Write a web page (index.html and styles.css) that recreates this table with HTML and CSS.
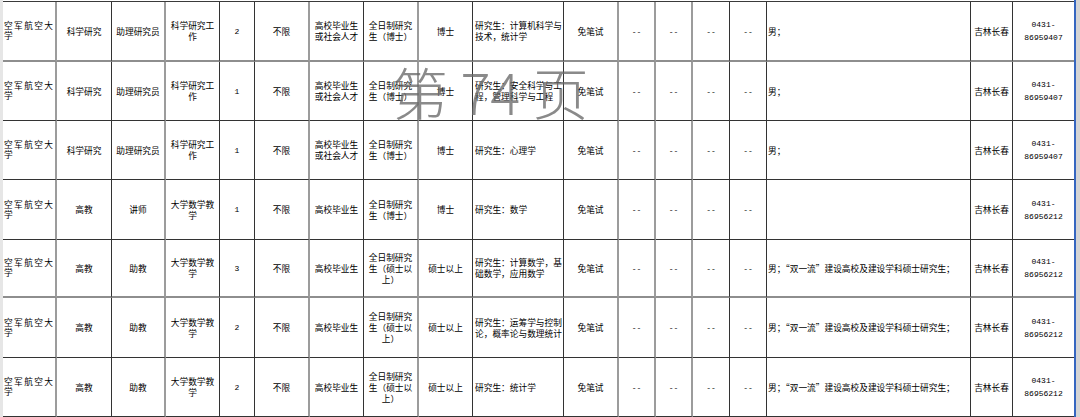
FILE: index.html
```html
<!DOCTYPE html>
<html lang="zh-CN">
<head>
<meta charset="utf-8">
<title>岗位表</title>
<link rel="stylesheet" href="styles.css">
</head>
<body>
<div class="page">
  <div class="strip"></div>
  <div class="sheet">
    <div class="grid">
      <!-- row 1 -->
      <div class="c c1 r1"><div><span class="dist">空军航空大</span><br>学</div></div>
      <div class="c c2 r1">科学研究</div>
      <div class="c c3 r1">助理研究员</div>
      <div class="c c4 r1">科学研究工<br>作</div>
      <div class="c c5 r1 num">2</div>
      <div class="c c6 r1">不限</div>
      <div class="c c7 r1">高校毕业生<br>或社会人才</div>
      <div class="c c8 r1">全日制研究<br>生（博士）</div>
      <div class="c c9 r1">博士</div>
      <div class="c c10 r1 left">研究生：计算机科学与<br>技术，统计学</div>
      <div class="c c11 r1">免笔试</div>
      <div class="c c12 r1 num">--</div>
      <div class="c c13 r1 num">--</div>
      <div class="c c14 r1 num">--</div>
      <div class="c c15 r1 num">--</div>
      <div class="c c16 r1 left">男；</div>
      <div class="c c17 r1">吉林长春</div>
      <div class="c c18 r1 num phone">0431-<br>86959407</div>
      <!-- row 2 -->
      <div class="c c1 r2"><div><span class="dist">空军航空大</span><br>学</div></div>
      <div class="c c2 r2">科学研究</div>
      <div class="c c3 r2">助理研究员</div>
      <div class="c c4 r2">科学研究工<br>作</div>
      <div class="c c5 r2 num">1</div>
      <div class="c c6 r2">不限</div>
      <div class="c c7 r2">高校毕业生<br>或社会人才</div>
      <div class="c c8 r2">全日制研究<br>生（博士）</div>
      <div class="c c9 r2">博士</div>
      <div class="c c10 r2 left">研究生：安全科学与工<br>程，管理科学与工程</div>
      <div class="c c11 r2">免笔试</div>
      <div class="c c12 r2 num">--</div>
      <div class="c c13 r2 num">--</div>
      <div class="c c14 r2 num">--</div>
      <div class="c c15 r2 num">--</div>
      <div class="c c16 r2 left">男；</div>
      <div class="c c17 r2">吉林长春</div>
      <div class="c c18 r2 num phone">0431-<br>86959407</div>
      <!-- row 3 -->
      <div class="c c1 r3"><div><span class="dist">空军航空大</span><br>学</div></div>
      <div class="c c2 r3">科学研究</div>
      <div class="c c3 r3">助理研究员</div>
      <div class="c c4 r3">科学研究工<br>作</div>
      <div class="c c5 r3 num">1</div>
      <div class="c c6 r3">不限</div>
      <div class="c c7 r3">高校毕业生<br>或社会人才</div>
      <div class="c c8 r3">全日制研究<br>生（博士）</div>
      <div class="c c9 r3">博士</div>
      <div class="c c10 r3 left">研究生：心理学</div>
      <div class="c c11 r3">免笔试</div>
      <div class="c c12 r3 num">--</div>
      <div class="c c13 r3 num">--</div>
      <div class="c c14 r3 num">--</div>
      <div class="c c15 r3 num">--</div>
      <div class="c c16 r3 left">男；</div>
      <div class="c c17 r3">吉林长春</div>
      <div class="c c18 r3 num phone">0431-<br>86959407</div>
      <!-- row 4 -->
      <div class="c c1 r4"><div><span class="dist">空军航空大</span><br>学</div></div>
      <div class="c c2 r4">高教</div>
      <div class="c c3 r4">讲师</div>
      <div class="c c4 r4">大学数学教<br>学</div>
      <div class="c c5 r4 num">1</div>
      <div class="c c6 r4">不限</div>
      <div class="c c7 r4">高校毕业生</div>
      <div class="c c8 r4">全日制研究<br>生（博士）</div>
      <div class="c c9 r4">博士</div>
      <div class="c c10 r4 left">研究生：数学</div>
      <div class="c c11 r4">免笔试</div>
      <div class="c c12 r4 num">--</div>
      <div class="c c13 r4 num">--</div>
      <div class="c c14 r4 num">--</div>
      <div class="c c15 r4 num">--</div>
      <div class="c c16 r4 left"></div>
      <div class="c c17 r4">吉林长春</div>
      <div class="c c18 r4 num phone">0431-<br>86956212</div>
      <!-- row 5 -->
      <div class="c c1 r5"><div><span class="dist">空军航空大</span><br>学</div></div>
      <div class="c c2 r5">高教</div>
      <div class="c c3 r5">助教</div>
      <div class="c c4 r5">大学数学教<br>学</div>
      <div class="c c5 r5 num">3</div>
      <div class="c c6 r5">不限</div>
      <div class="c c7 r5">高校毕业生</div>
      <div class="c c8 r5">全日制研究<br>生（硕士以<br>上）</div>
      <div class="c c9 r5">硕士以上</div>
      <div class="c c10 r5 left">研究生：计算数学，基<br>础数学，应用数学</div>
      <div class="c c11 r5">免笔试</div>
      <div class="c c12 r5 num">--</div>
      <div class="c c13 r5 num">--</div>
      <div class="c c14 r5 num">--</div>
      <div class="c c15 r5 num">--</div>
      <div class="c c16 r5 left">男；“双一流”建设高校及建设学科硕士研究生；</div>
      <div class="c c17 r5">吉林长春</div>
      <div class="c c18 r5 num phone">0431-<br>86956212</div>
      <!-- row 6 -->
      <div class="c c1 r6"><div><span class="dist">空军航空大</span><br>学</div></div>
      <div class="c c2 r6">高教</div>
      <div class="c c3 r6">助教</div>
      <div class="c c4 r6">大学数学教<br>学</div>
      <div class="c c5 r6 num">2</div>
      <div class="c c6 r6">不限</div>
      <div class="c c7 r6">高校毕业生</div>
      <div class="c c8 r6">全日制研究<br>生（硕士以<br>上）</div>
      <div class="c c9 r6">硕士以上</div>
      <div class="c c10 r6 left">研究生：运筹学与控制<br>论，概率论与数理统计</div>
      <div class="c c11 r6">免笔试</div>
      <div class="c c12 r6 num">--</div>
      <div class="c c13 r6 num">--</div>
      <div class="c c14 r6 num">--</div>
      <div class="c c15 r6 num">--</div>
      <div class="c c16 r6 left">男；“双一流”建设高校及建设学科硕士研究生；</div>
      <div class="c c17 r6">吉林长春</div>
      <div class="c c18 r6 num phone">0431-<br>86956212</div>
      <!-- row 7 -->
      <div class="c c1 r7"><div><span class="dist">空军航空大</span><br>学</div></div>
      <div class="c c2 r7">高教</div>
      <div class="c c3 r7">助教</div>
      <div class="c c4 r7">大学数学教<br>学</div>
      <div class="c c5 r7 num">2</div>
      <div class="c c6 r7">不限</div>
      <div class="c c7 r7">高校毕业生</div>
      <div class="c c8 r7">全日制研究<br>生（硕士以<br>上）</div>
      <div class="c c9 r7">硕士以上</div>
      <div class="c c10 r7 left">研究生：统计学</div>
      <div class="c c11 r7">免笔试</div>
      <div class="c c12 r7 num">--</div>
      <div class="c c13 r7 num">--</div>
      <div class="c c14 r7 num">--</div>
      <div class="c c15 r7 num">--</div>
      <div class="c c16 r7 left">男；“双一流”建设高校及建设学科硕士研究生；</div>
      <div class="c c17 r7">吉林长春</div>
      <div class="c c18 r7 num phone">0431-<br>86956212</div>
    </div>
    <div class="watermark">第 74 页</div>
  </div>
  <div class="edge"></div>
  <div class="scroll"></div>
</div>
</body>
</html>
```
FILE: styles.css
```css
* { box-sizing: border-box; }
html, body { margin: 0; padding: 0; background: #fff; }
body {
  width: 1080px;
  height: 417px;
  overflow: hidden;
  font-family: "Noto Sans CJK SC", "Noto Sans", sans-serif;
  color: #000;
}
.page {
  display: flex;
  width: 1080px;
  height: 417px;
}
.strip {
  width: 3px;
  flex: none;
  background: #e6e6e6;
}
.sheet {
  position: relative;
  width: 1071px;
  flex: none;
  padding-top: 1px;
}
.edge {
  width: 2px;
  flex: none;
  background: #3566c0;
}
.scroll {
  width: 4px;
  flex: none;
  background: #d4d4d4;
}
.grid {
  display: grid;
  grid-template-columns: 54px 55px 54px 54px 35px 55px 54px 55px 54px 91px 55px 37px 37px 37px 37px 204px 42px 61px;
  grid-template-rows: 60px 59px 59px 60px 58px 60px 59px;
  border-top: 1px solid #3a3a3a;
}
.c {
  display: flex;
  align-items: center;
  justify-content: center;
  text-align: center;
  font-size: 8.7px;
  line-height: 11px;
  border-right: 1px solid #333;
  border-bottom: 1px solid #333;
  white-space: nowrap;
  overflow: hidden;
}
.c1, .c3, .c6, .c8, .c11, .c12, .c13 {
  border-right: 2px solid #9c9c9c;
}
.r1, .r5 {
  border-bottom: 2px solid #8e8e8e;
}
.c18 { border-right: none; }
.c1 {
  justify-content: flex-start;
  text-align: left;
  padding-left: 1px;
  line-height: 10px;
}
.dist { letter-spacing: 1.4px; }
.left {
  justify-content: flex-start;
  text-align: left;
  padding-left: 1px;
}
.c10 { padding-left: 2px; }
.num {
  font-family: "Liberation Mono", "DejaVu Sans Mono", monospace;
  font-size: 8px;
}
.phone { line-height: 13px; }
.watermark {
  position: absolute;
  left: 389px;
  top: 56px;
  font-family: "Noto Sans CJK SC", "Noto Sans", sans-serif;
  font-size: 56px;
  line-height: 70px;
  font-weight: 300;
  color: rgba(105, 105, 105, 0.78);
  white-space: pre;
  pointer-events: none;
}
```
